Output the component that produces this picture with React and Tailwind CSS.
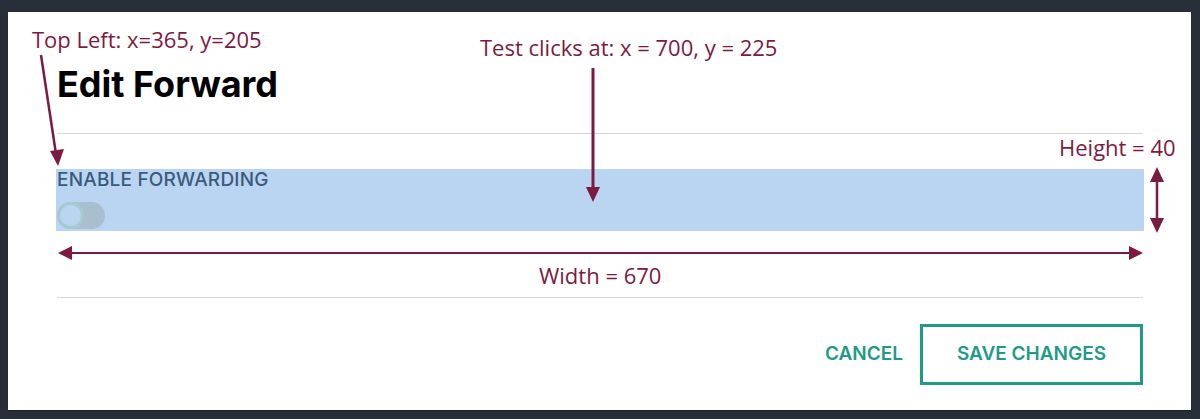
import React from 'react';

const MAROON = '#7b1b42';

function Annotations() {
  return (
    <div className="pointer-events-none absolute inset-0">
      <svg className="absolute inset-0" width="1200" height="419" viewBox="0 0 1200 419">
        {/* top-left arrow */}
        <line x1="41" y1="55" x2="56" y2="154" stroke={MAROON} strokeWidth="2.5" />
        <polygon points="58,166 50,151 64,149" fill={MAROON} />
        {/* test clicks arrow */}
        <line x1="593" y1="68" x2="593" y2="190" stroke={MAROON} strokeWidth="3" />
        <polygon points="586,187 600,187 593,202" fill={MAROON} />
        {/* height arrow */}
        <line x1="1157" y1="178" x2="1157" y2="222" stroke={MAROON} strokeWidth="2.5" />
        <polygon points="1150,182 1164,182 1157,167" fill={MAROON} />
        <polygon points="1150,218 1164,218 1157,233" fill={MAROON} />
        {/* width arrow */}
        <line x1="68" y1="253" x2="1133" y2="253" stroke={MAROON} strokeWidth="2" />
        <polygon points="58,253 72,246 72,260" fill={MAROON} />
        <polygon points="1143,253 1129,246 1129,260" fill={MAROON} />
      </svg>
      <span className="absolute left-[32px] top-[28px] whitespace-nowrap text-[22px] leading-[22px] text-[#7b1b42] font-['Open_Sans',sans-serif]">
        Top Left: x=365, y=205
      </span>
      <span className="absolute left-[480px] top-[36px] whitespace-nowrap text-[22px] leading-[22px] text-[#7b1b42] font-['Open_Sans',sans-serif]">
        Test clicks at: x = 700, y = 225
      </span>
      <span className="absolute left-[1059px] top-[136px] whitespace-nowrap text-[22px] leading-[22px] text-[#7b1b42] font-['Open_Sans',sans-serif]">
        Height = 40
      </span>
      <span className="absolute left-[539px] top-[264px] whitespace-nowrap text-[22px] leading-[22px] text-[#7b1b42] font-['Open_Sans',sans-serif]">
        Width = 670
      </span>
    </div>
  );
}

export default function App() {
  return (
    <div className="relative w-[1200px] h-[419px] overflow-hidden bg-[#282e37] pl-[8px] pt-[12px] font-['Inter',sans-serif]">
      <div className="flex h-[398px] w-[1183px] flex-col bg-white px-[48px] pl-[49px] pt-[54px] shadow-[0_1px_1px_rgba(0,0,0,0.25)]">
        {/* Title */}
        <h1 className="text-[36px] font-bold leading-[36px] text-black">Edit Forward</h1>

        <div className="mt-[31px] border-t border-[#d6d6d6]" />

        {/* Field */}
        <div className="mt-[35px] -mx-px flex h-[62px] flex-col bg-[#bad5f1] px-px">
          <label className="text-[19px] font-medium leading-[22px] tracking-[0.2px] text-[#3b5a7c]">ENABLE FORWARDING</label>
          <div className="mt-[11px] flex h-[27px] w-[48px] items-center rounded-full bg-[#a9bfcf]">
            <div className="h-[27px] w-[27px] rounded-full border-[3px] border-[#a4cbd2] bg-[#bad5f1]" />
          </div>
        </div>

        <div className="mt-[66px] border-t border-[#d6d6d6]" />

        {/* Actions */}
        <div className="mt-[26px] flex items-center justify-end gap-[17px]">
          <button className="text-[19px] font-semibold text-[#1f9b85]">CANCEL</button>
          <button className="flex h-[61px] w-[223px] items-center justify-center border-[3px] border-[#1f9b85] text-[19px] font-semibold text-[#1f9b85]">
            SAVE CHANGES
          </button>
        </div>
      </div>
      <Annotations />
    </div>
  );
}
